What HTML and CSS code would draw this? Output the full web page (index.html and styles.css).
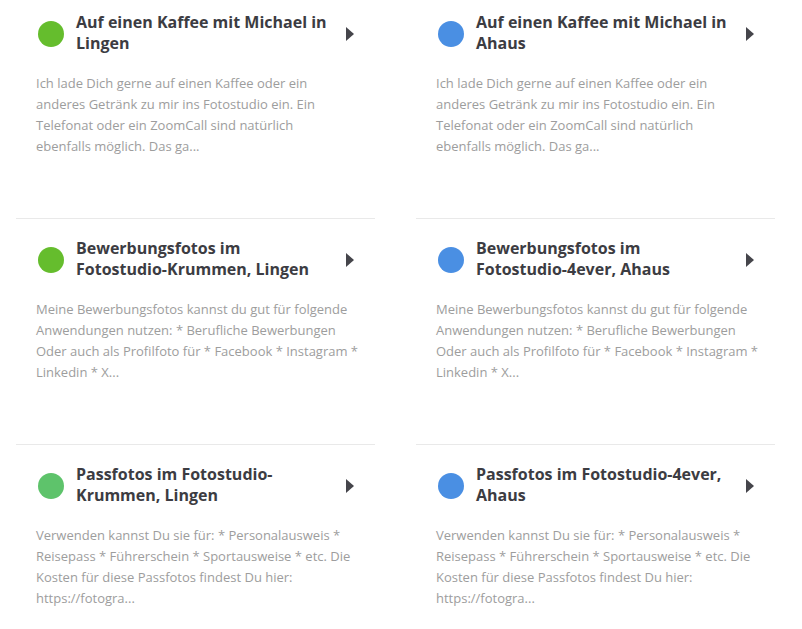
FILE: index.html
```html
<!DOCTYPE html>
<html lang="de">
<head>
<meta charset="utf-8">
<title>Termine</title>
<link rel="stylesheet" href="styles.css">
</head>
<body>
<div class="grid">
  <div class="item">
    <div class="head">
      <span class="dot green"></span>
      <h2 class="title">Auf einen Kaffee mit Michael in Lingen</h2>
      <span class="arrow"></span>
    </div>
    <p class="desc">Ich lade Dich gerne auf einen Kaffee oder ein<br>anderes Getränk zu mir ins Fotostudio ein. Ein<br>Telefonat oder ein ZoomCall sind natürlich<br>ebenfalls möglich. Das ga...</p>
  </div>
  <div class="item">
    <div class="head">
      <span class="dot blue"></span>
      <h2 class="title">Auf einen Kaffee mit Michael in Ahaus</h2>
      <span class="arrow"></span>
    </div>
    <p class="desc">Ich lade Dich gerne auf einen Kaffee oder ein<br>anderes Getränk zu mir ins Fotostudio ein. Ein<br>Telefonat oder ein ZoomCall sind natürlich<br>ebenfalls möglich. Das ga...</p>
  </div>
  <div class="item">
    <div class="head">
      <span class="dot green"></span>
      <h2 class="title">Bewerbungsfotos im Fotostudio-Krummen, Lingen</h2>
      <span class="arrow"></span>
    </div>
    <p class="desc">Meine Bewerbungsfotos kannst du gut für folgende<br>Anwendungen nutzen: * Berufliche Bewerbungen<br>Oder auch als Profilfoto für * Facebook * Instagram *<br>Linkedin * X...</p>
  </div>
  <div class="item">
    <div class="head">
      <span class="dot blue"></span>
      <h2 class="title">Bewerbungsfotos im Fotostudio-4ever, Ahaus</h2>
      <span class="arrow"></span>
    </div>
    <p class="desc">Meine Bewerbungsfotos kannst du gut für folgende<br>Anwendungen nutzen: * Berufliche Bewerbungen<br>Oder auch als Profilfoto für * Facebook * Instagram *<br>Linkedin * X...</p>
  </div>
  <div class="item">
    <div class="head">
      <span class="dot lightgreen"></span>
      <h2 class="title">Passfotos im Fotostudio-Krummen, Lingen</h2>
      <span class="arrow"></span>
    </div>
    <p class="desc">Verwenden kannst Du sie für: * Personalausweis *<br>Reisepass * Führerschein * Sportausweise * etc. Die<br>Kosten für diese Passfotos findest Du hier:<br>https://fotogra...</p>
  </div>
  <div class="item">
    <div class="head">
      <span class="dot blue"></span>
      <h2 class="title">Passfotos im Fotostudio-4ever, Ahaus</h2>
      <span class="arrow"></span>
    </div>
    <p class="desc">Verwenden kannst Du sie für: * Personalausweis *<br>Reisepass * Führerschein * Sportausweise * etc. Die<br>Kosten für diese Passfotos findest Du hier:<br>https://fotogra...</p>
  </div>
</div>
</body>
</html>
```

FILE: styles.css
```css
html, body {
  margin: 0;
  padding: 0;
  background: #ffffff;
}

body {
  font-family: "Open Sans", Arial, sans-serif;
  overflow: hidden;
}

.grid {
  display: grid;
  grid-template-columns: 359px 359px;
  column-gap: 41px;
  margin: -7px 0 0 16px;
}

.item {
  border-bottom: 1px solid #e9e9e9;
  padding: 19px 0 0 0;
  height: 226px;
  box-sizing: border-box;
}

.head {
  display: flex;
  align-items: center;
  padding: 0 21px 0 22px;
}

.dot {
  flex: none;
  width: 26px;
  height: 26px;
  border-radius: 50%;
  margin-right: 12px;
  margin-top: 1px;
}

.green { background: #65bd2d; }
.blue { background: #4a8fe3; }
.lightgreen { background: #5ec36b; }

.title {
  flex: 1;
  margin: 0;
  font-size: 16px;
  line-height: 21px;
  font-weight: 700;
  color: #3c3c42;
  padding-right: 12px;
}

.arrow {
  flex: none;
  width: 0;
  height: 0;
  margin-top: 2px;
  border-top: 7px solid transparent;
  border-bottom: 7px solid transparent;
  border-left: 8px solid #45454b;
}

.desc {
  margin: 19px 0 0 0;
  padding: 0 4px 0 20px;
  font-size: 13px;
  line-height: 21px;
  color: #9d9d9d;
  white-space: nowrap;
}
```
